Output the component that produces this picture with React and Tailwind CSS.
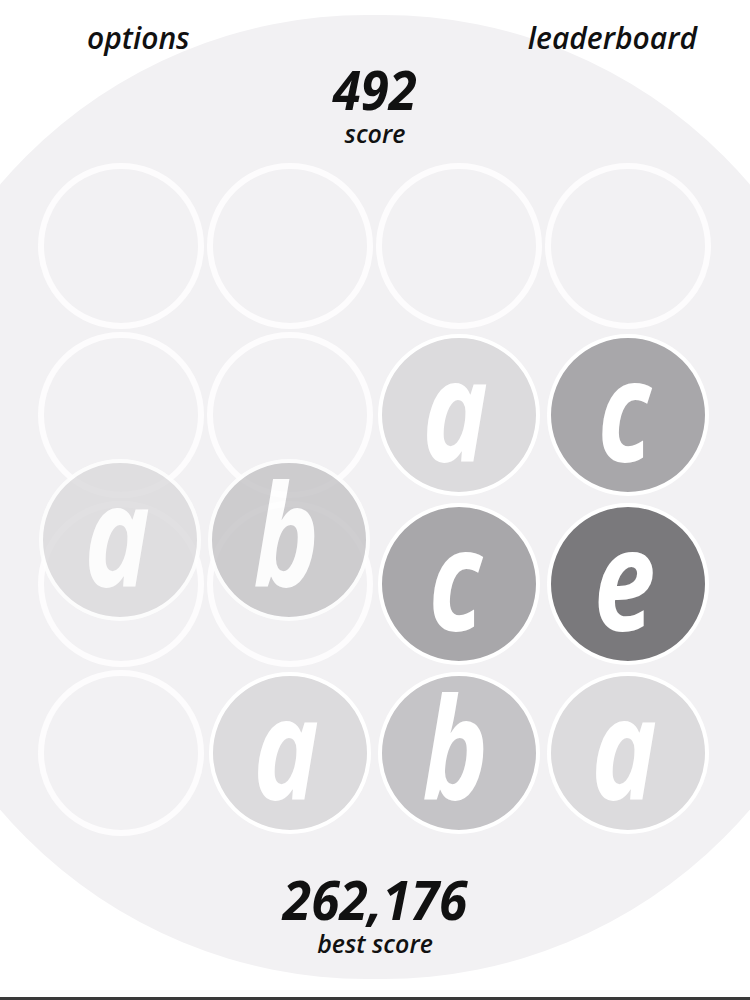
import React from "react";

const font = { fontFamily: '"Open Sans", "Noto Sans", sans-serif' };

const COLORS = {
  a: "bg-[#dcdbdd]",
  b: "bg-[#c5c4c7]",
  c: "bg-[#a8a7aa]",
  e: "bg-[#7a797c]",
};

const board = [
  [null, null, null, null],
  [null, null, "a", "c"],
  [null, null, "c", "e"],
  [null, "a", "b", "a"],
];

const moving = { "2-0": "a", "2-1": "b" };

function Tile({ letter }) {
  return (
    <div
      className={`w-[162px] h-[162px] rounded-full border-[4px] border-white flex items-center justify-center ${COLORS[letter]}`}
    >
      <span className="text-white italic font-bold text-[142px] leading-none -mt-[16px] -ml-[6px] scale-x-[0.78]">
        {letter}
      </span>
    </div>
  );
}

function Ring() {
  return <div className="w-[166px] h-[166px] rounded-full border-[6px] border-[#fdfcfd]" />;
}

export default function App() {
  return (
    <div
      className="relative w-[750px] h-[1000px] overflow-hidden bg-white flex flex-col"
      style={font}
    >
      <div className="absolute left-[-115px] top-[15px] w-[980px] h-[964px] rounded-full bg-[#f2f1f3]" />

      <div className="relative flex flex-col flex-1">
        <div className="flex justify-between items-start pl-[87px] pr-[53px] pt-[23px]">
          <span className="italic font-semibold text-[30px] leading-none text-[#111]">
            options
          </span>
          <span className="italic font-semibold text-[30px] leading-none text-[#111]">
            leaderboard
          </span>
        </div>

        <div className="flex flex-col items-center mt-[10px]">
          <span className="italic font-bold text-[53px] leading-none text-[#111] scale-x-[0.96]">
            492
          </span>
          <span className="italic font-semibold text-[25px] leading-none text-[#111] mt-[5px]">
            score
          </span>
        </div>

        <div className="grid grid-cols-4 w-[676px] ml-[36px] mt-[15px]">
          {board.map((row, r) =>
            row.map((cell, c) => {
              const mv = moving[`${r}-${c}`];
              return (
                <div
                  key={`${r}-${c}`}
                  className="relative w-[169px] h-[169px] flex items-center justify-center"
                >
                  {cell ? <Tile letter={cell} /> : <Ring />}
                  {mv && (
                    <div className="absolute left-[3px] top-[-40px] opacity-[0.82]">
                      <Tile letter={mv} />
                    </div>
                  )}
                </div>
              );
            })
          )}
        </div>

        <div className="flex flex-col items-center mt-[36px]">
          <span className="italic font-bold text-[53px] leading-none text-[#111] scale-x-[0.97]">
            262,176
          </span>
          <span className="italic font-semibold text-[25px] leading-none text-[#111] mt-[5px]">
            best score
          </span>
        </div>

        <div className="mt-auto h-[3px] bg-[#3a3a3a]" />
      </div>
    </div>
  );
}
